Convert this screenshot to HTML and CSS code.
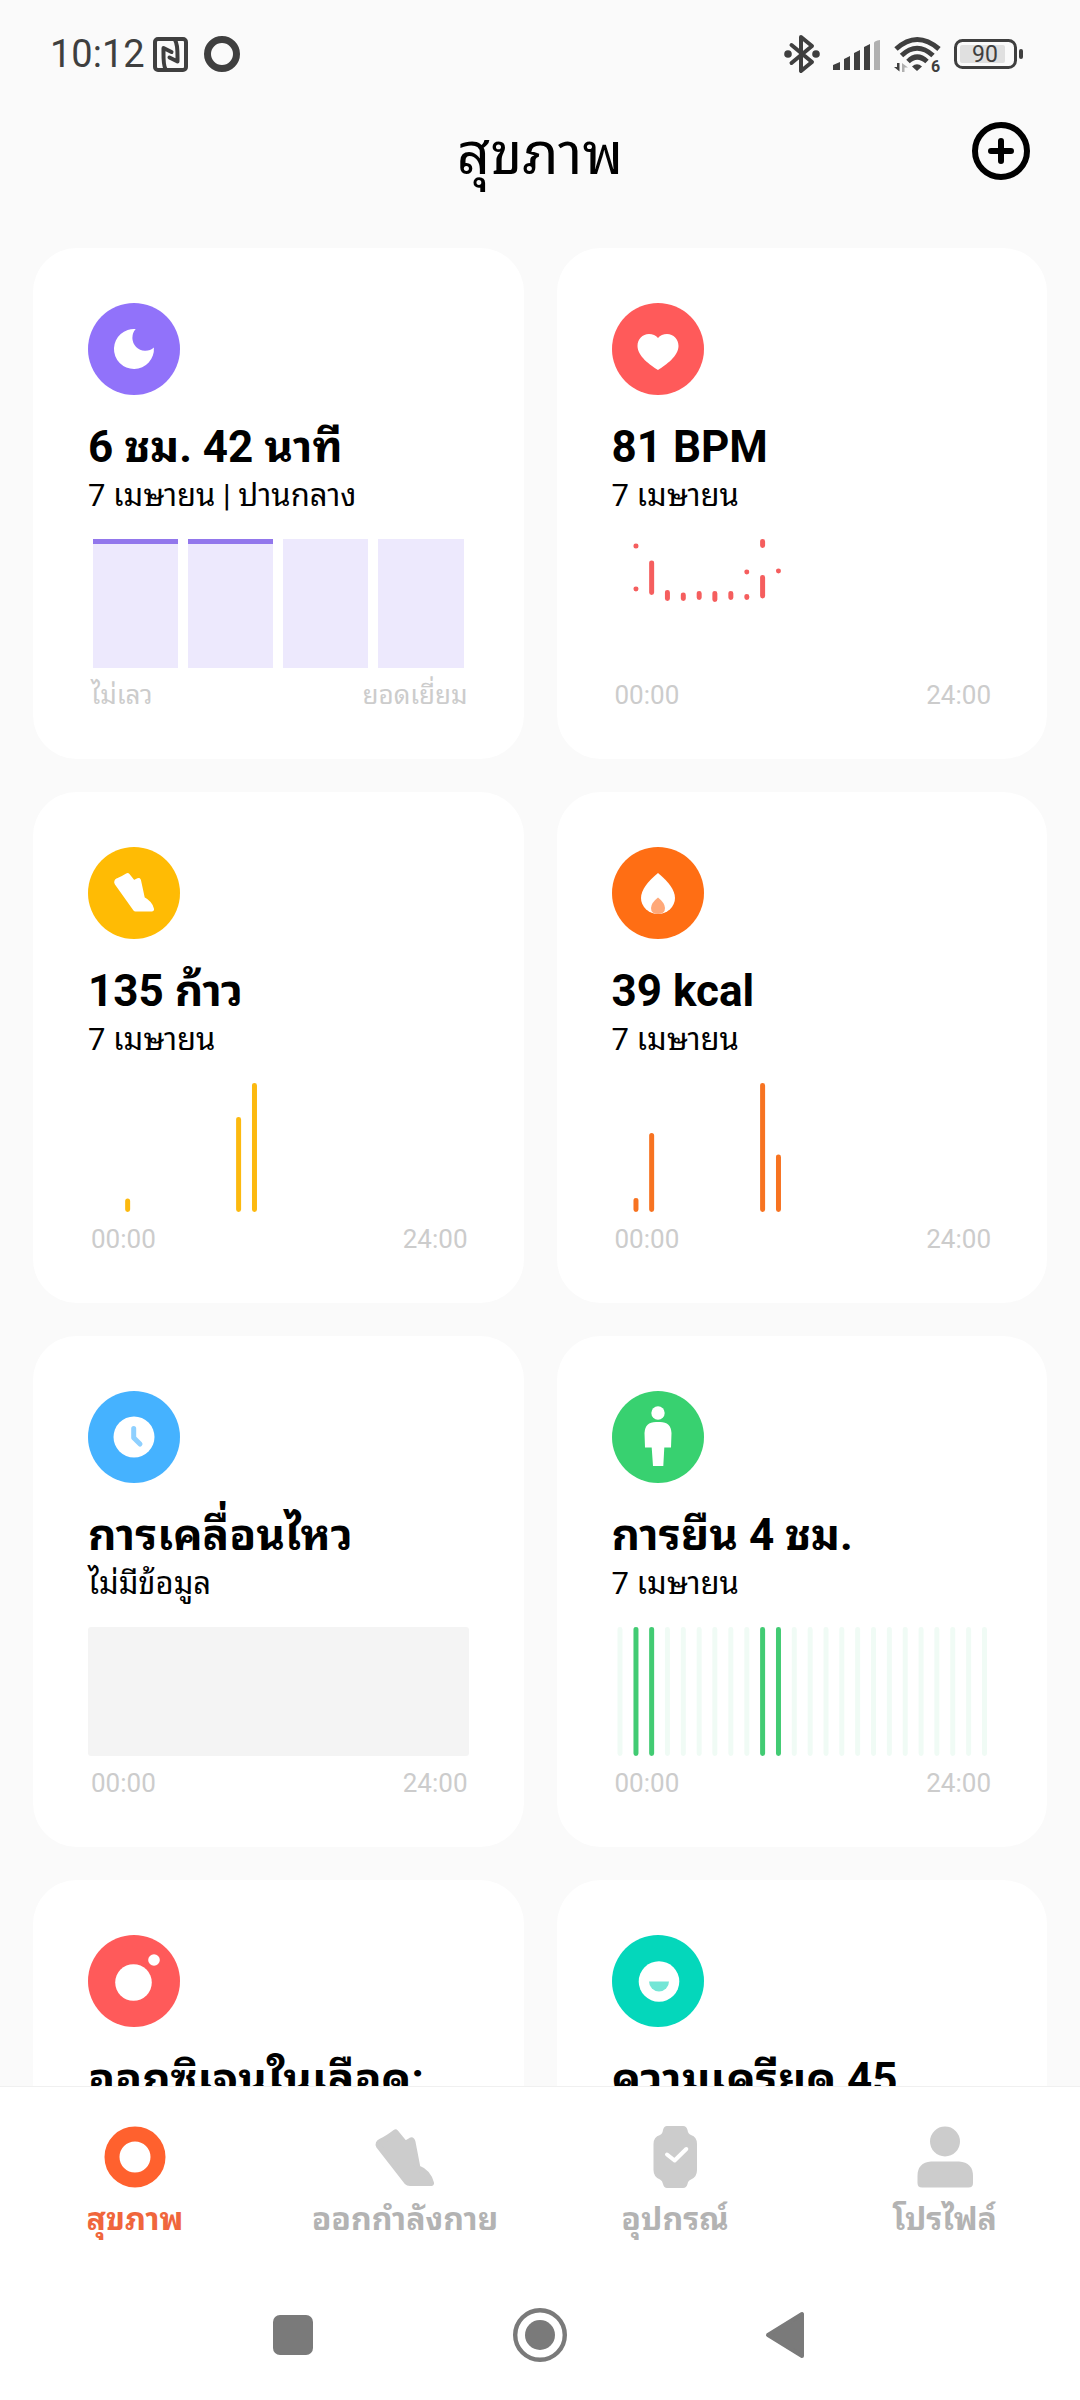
FILE: index.html
```html
<!DOCTYPE html>
<html lang="th">
<head>
    <meta charset="UTF-8">
    <meta name="viewport" content="width=device-width, initial-scale=1.0">
    <title>สุขภาพ</title>
    <link rel="stylesheet" href="styles.css">
</head>
<body>
<div class="screen">

    <!-- status bar -->
    <div class="status-bar">
        <div class="status-left">
            <span class="clock">10:12</span>
            <svg class="icon-nfc" width="35" height="35" viewBox="0 0 35 35" fill="none" stroke="#3f3f3f" stroke-width="4">
                <rect x="2" y="2" width="31" height="31" rx="3"/>
                <path d="M12.500 32C10 28 10.500 20 10.500 11L18.500 15M22 3C25 7 24.500 15 24.500 24.500L16.500 20.500" stroke-linecap="round" stroke-linejoin="round"/>
            </svg>
            <svg width="36" height="36" viewBox="0 0 36 36" fill="none" stroke="#3f3f3f" stroke-width="7">
                <circle cx="18" cy="18" r="14.500"/>
            </svg>
        </div>
        <div class="status-right">
            <svg width="36" height="40" viewBox="0 0 36 40">
                <path d="M7.500 11L28 28L17 37V3L28 12L7.500 29" fill="none" stroke="#3f3f3f" stroke-width="4" stroke-linecap="round" stroke-linejoin="round"/>
                <circle cx="4" cy="20" r="3.800" fill="#3f3f3f"/>
                <circle cx="32" cy="20" r="3.800" fill="#3f3f3f"/>
            </svg>
            <svg width="48" height="40" viewBox="0 0 48 40" fill="#3f3f3f">
                <path d="M0 31L7 28V36H0ZM11 25L17 22V36H11ZM21 19L27 16V36H21ZM31 13L37 10V36H31Z"/>
                <path d="M41 9Q41 7 47 6V36H41Z" fill="#b0b0b0"/>
            </svg>
            <svg width="47" height="40" viewBox="0 0 47 40">
                <path d="M2 15Q23 -4 45 15M7.500 21.500Q23 7 39 21.500M14 27.500Q23 18.500 33 27.500" fill="none" stroke="#3f3f3f" stroke-width="5"/>
                <path d="M18 32.500Q23 28 28 32.500L23 37Z" fill="#3f3f3f"/>
                <path d="M5.500 29V37.500L0 33H3V29Z" fill="#3f3f3f"/>
                <path d="M8 38V29L14 33.500H10.500V38Z" fill="#b0b0b0"/>
                <text class="wifi-text" x="37" y="38">6</text>
            </svg>
            <svg width="69" height="40" viewBox="0 0 69 40">
                <rect x="1.500" y="6.500" width="60" height="27" rx="7" fill="none" stroke="#3f3f3f" stroke-width="3"/>
                <rect x="6" y="11" width="45" height="18" rx="2" fill="#e0e0e0"/>
                <rect x="65" y="15" width="4" height="10" rx="2" fill="#3f3f3f"/>
                <text class="battery-text" x="18" y="28">90</text>
            </svg>
        </div>
    </div>

    <!-- header -->
    <header class="header">
        <h1>สุขภาพ</h1>
        <button class="btn-add" type="button" aria-label="เพิ่ม">
            <svg width="58" height="58" viewBox="0 0 58 58" fill="none" stroke="#000" stroke-width="6">
                <circle cx="29" cy="29" r="26"/>
                <path d="M19 29H39M29 19V39" stroke-linecap="round"/>
            </svg>
        </button>
    </header>

    <!-- cards -->
    <main class="cards">
        <section class="card">
            <svg class="card-icon" viewBox="0 0 92 92">
                <circle cx="46" cy="46" r="46" fill="#9172fa"/>
                <path d="M47.700 26.100A20 20 0 1 0 65.900 44.600A13 13 0 0 1 47.700 26.100Z" fill="#fff"/>
            </svg>
            <h2>6 ชม. 42 นาที</h2>
            <p class="card-date">7 เมษายน | ปานกลาง</p>
            <div class="chart sleep-chart">
                <span class="sleep-block active"></span>
                <span class="sleep-block active"></span>
                <span class="sleep-block"></span>
                <span class="sleep-block"></span>
            </div>
            <div class="axis"><span>ไม่เลว</span><span>ยอดเยี่ยม</span></div>
        </section>

        <section class="card">
            <svg class="card-icon" viewBox="0 0 92 92">
                <circle cx="46" cy="46" r="46" fill="#ff5a5a"/>
                <path d="M46 67C38 62 25.500 53 25.500 43C25.500 36 30.500 31 37 31C40.500 31 44 32.500 46 35C48 32.500 51.500 31 55 31C61.500 31 66.500 36 66.500 43C66.500 53 54 62 46 67Z" fill="#fff"/>
            </svg>
            <h2>81 BPM</h2>
            <p class="card-date">7 เมษายน</p>
            <svg class="chart chart-heart" viewBox="0 0 381 129">
                <path d="M24 7V7.010M24 50V50.010M39.700 24V53.500M55.500 53.500V59.500M71.400 56V59.500M87.300 54.500V58.500M103 54.500V60.500M119 54.500V58.500M135 33V33.010M135 57.500V58.500M150.800 2.500V6.500M150.800 38.500V57M166.700 32V32.010"/>
            </svg>
            <div class="axis"><span>00:00</span><span>24:00</span></div>
        </section>

        <section class="card">
            <svg class="card-icon" viewBox="0 0 92 92">
                <circle cx="46" cy="46" r="46" fill="#ffbb04"/>
                <path d="M29 36Q28 34.500 30 33.500Q34 32 39.500 28.500L45.500 36L50.500 33.500L54.500 52Q62 56 63.500 62H47.500Z" fill="#fff" stroke="#fff" stroke-width="5" stroke-linejoin="round"/>
            </svg>
            <h2>135 ก้าว</h2>
            <p class="card-date">7 เมษายน</p>
            <svg class="chart chart-steps" viewBox="0 0 381 129">
                <path d="M39.700 118V126.500M150.800 36.500V126.500M166.700 2.500V126.500"/>
            </svg>
            <div class="axis"><span>00:00</span><span>24:00</span></div>
        </section>

        <section class="card">
            <svg class="card-icon" viewBox="0 0 92 92">
                <circle cx="46" cy="46" r="46" fill="#ff6e14"/>
                <path d="M46 26Q63 40 63 51A17 16 0 0 1 29 51Q29 40 46 26Z" fill="#fff"/>
                <path d="M46 50.500Q53 56 53 61Q53 67 46 67Q39 67 39 61Q39 56 46 50.500Z" fill="#ffa878"/>
            </svg>
            <h2>39 kcal</h2>
            <p class="card-date">7 เมษายน</p>
            <svg class="chart chart-kcal" viewBox="0 0 381 129">
                <path d="M24 117.500V126.500M39.700 52.500V126.500M150.800 2.500V126.500M166.700 74V126.500"/>
            </svg>
            <div class="axis"><span>00:00</span><span>24:00</span></div>
        </section>

        <section class="card">
            <svg class="card-icon" viewBox="0 0 92 92">
                <circle cx="46" cy="46" r="46" fill="#45b2ff"/>
                <circle cx="46" cy="46" r="20.500" fill="#fff"/>
                <path d="M45.700 37.500V46.700L52 53" fill="none" stroke="#8ed0ff" stroke-width="5" stroke-linecap="round" stroke-linejoin="round"/>
            </svg>
            <h2>การเคลื่อนไหว</h2>
            <p class="card-date">ไม่มีข้อมูล</p>
            <div class="chart chart-empty"></div>
            <div class="axis"><span>00:00</span><span>24:00</span></div>
        </section>

        <section class="card">
            <svg class="card-icon" viewBox="0 0 92 92">
                <circle cx="46" cy="46" r="46" fill="#38d170"/>
                <circle cx="46" cy="22" r="6.700" fill="#fff"/>
                <path d="M33 56.500L32.500 42Q33 31 44 31H48Q59 31 59.500 42L59 56.500H52.300L51.300 75H41L39.700 56.500Z" fill="#fff"/>
            </svg>
            <h2>การยืน 4 ชม.</h2>
            <p class="card-date">7 เมษายน</p>
            <svg class="chart chart-stand" viewBox="0 0 381 129">
                <path class="faint" d="M8 2.500V126.500M55.500 2.500V126.500M71.400 2.500V126.500M87.300 2.500V126.500M103 2.500V126.500M119 2.500V126.500M135 2.500V126.500M182.500 2.500V126.500M198.400 2.500V126.500M214.300 2.500V126.500M230.100 2.500V126.500M246 2.500V126.500M261.900 2.500V126.500M277.700 2.500V126.500M293.600 2.500V126.500M309.500 2.500V126.500M325.300 2.500V126.500M341.200 2.500V126.500M357.100 2.500V126.500M373 2.500V126.500"/>
                <path d="M24 2.500V126.500M39.700 2.500V126.500M150.800 2.500V126.500M166.700 2.500V126.500"/>
            </svg>
            <div class="axis"><span>00:00</span><span>24:00</span></div>
        </section>

        <section class="card">
            <svg class="card-icon" viewBox="0 0 92 92">
                <circle cx="46" cy="46" r="46" fill="#ff5a5a"/>
                <circle cx="45.500" cy="47.500" r="18.300" fill="#fff"/>
                <circle cx="66" cy="25" r="5.800" fill="#fff"/>
            </svg>
            <h2>ออกซิเจนในเลือด:</h2>
        </section>

        <section class="card">
            <svg class="card-icon" viewBox="0 0 92 92">
                <circle cx="46" cy="46" r="46" fill="#04d7bb"/>
                <circle cx="47" cy="46.500" r="20.300" fill="#fff"/>
                <path d="M37 46.500H57A10 10 0 0 1 37 46.500Z" fill="#74e6d6"/>
            </svg>
            <h2>ความเครียด 45</h2>
        </section>
    </main>

    <!-- tab bar -->
    <nav class="tabs">
        <a class="tab active" href="#health">
            <svg width="62" height="62" viewBox="0 0 62 62" fill="none" stroke="#ff612e" stroke-width="15">
                <circle cx="31" cy="31" r="23"/>
            </svg>
            <span>สุขภาพ</span>
        </a>
        <a class="tab" href="#workout">
            <svg width="62" height="62" viewBox="0 0 62 62">
                <path d="M5 20Q3.500 17 7 15.500Q13 13 21.500 6.500L31 18L37 14.500Q38 14 38.500 16L43.500 42Q54 46 57 57H36Q34 57 33 56Z" fill="#ccc" stroke="#ccc" stroke-width="6" stroke-linejoin="round"/>
            </svg>
            <span>ออกกำลังกาย</span>
        </a>
        <a class="tab" href="#device">
            <svg width="62" height="62" viewBox="0 0 62 62">
                <path d="M23 0H39Q42.500 0 43.500 4Q44 8 47 9Q53 11 53 18V44Q53 51 47 53.500Q44 54.500 43.500 58Q42.500 62 39 62H23Q20 62 19 58Q18.500 54.500 16 53.500Q9.500 51 9.500 44V18Q9.500 11 16 9Q18.500 8 19 4Q20 0 23 0Z" fill="#ccc"/>
                <path d="M23 28.500L30.600 34.500L42.300 23" fill="none" stroke="#fff" stroke-width="4" stroke-linecap="round" stroke-linejoin="round"/>
            </svg>
            <span>อุปกรณ์</span>
        </a>
        <a class="tab" href="#profile">
            <svg width="62" height="62" viewBox="0 0 62 62" fill="#ccc">
                <circle cx="31" cy="15.500" r="15"/>
                <path d="M17 35.500H45Q59 36.500 59 50V57Q59 61.500 54.500 61.500H8Q3.500 61.500 3.500 57V50Q3.500 36.500 17 35.500Z"/>
            </svg>
            <span>โปรไฟล์</span>
        </a>
    </nav>

    <!-- android buttons -->
    <div class="system-nav">
        <button type="button" aria-label="แอปล่าสุด">
            <svg width="54" height="54" viewBox="0 0 54 54"><rect x="7" y="7" width="40" height="40" rx="7" fill="#7a7a7a"/></svg>
        </button>
        <button type="button" aria-label="หน้าแรก">
            <svg width="54" height="54" viewBox="0 0 54 54">
                <circle cx="27" cy="27" r="24.800" fill="none" stroke="#7a7a7a" stroke-width="4.400"/>
                <circle cx="27" cy="27" r="15" fill="#7a7a7a"/>
            </svg>
        </button>
        <button type="button" aria-label="ย้อนกลับ">
            <svg width="54" height="54" viewBox="0 0 54 54"><path d="M8 27L42 6V48Z" fill="#7a7a7a" stroke="#7a7a7a" stroke-width="4" stroke-linejoin="round"/></svg>
        </button>
    </div>

</div>
</body>
</html>
```

FILE: styles.css
```css
* {
    box-sizing: border-box;
}
body {
    margin: 0;
    font-family: Roboto, "Noto Sans Thai Looped", "Noto Looped Thai", "Noto Sans Thai", "Noto Sans", sans-serif;
    background-color: #fafafa;
    color: #000;
}
h1, h2, p {
    margin: 0;
}
svg {
    display: block;
    overflow: visible;
}
button {
    padding: 0;
    border: none;
    background: none;
    cursor: pointer;
}
.screen {
    display: flex;
    flex-direction: column;
    height: 100vh;
}
.status-bar {
    display: flex;
    justify-content: space-between;
    align-items: center;
    height: 108px;
    padding: 0 57px 0 50px;
    color: #3f3f3f;
}
.status-left, .status-right {
    display: flex;
    align-items: center;
    gap: 14px;
}
.status-right {
    gap: 13px;
}
.clock {
    font-size: 38px;
}
.icon-nfc {
    margin-right: 2px;
    margin-left: -6px;
}
.wifi-text {
    font-size: 16px;
    font-weight: 700;
    fill: #3f3f3f;
}
.battery-text {
    font-size: 23px;
    fill: #3f3f3f;
}
.header {
    display: grid;
    grid-template-columns: 1fr auto 1fr;
    align-items: center;
    height: 86px;
    padding: 0 50px;
}
.header h1 {
    grid-column: 2;
    padding-top: 6px;
    font-size: 58px;
    font-weight: 400;
    line-height: 80px;
}
.btn-add {
    justify-self: end;
}
.cards {
    display: grid;
    grid-template-columns: 1fr 1fr;
    grid-auto-rows: min-content;
    gap: 33px;
    flex: 1;
    min-height: 0;
    padding: 54px 33px 0;
    overflow: hidden;
}
.card {
    min-width: 0;
    padding: 55px 55px 44px;
    border-radius: 44px;
    background: #fff;
}
.card-icon {
    width: 92px;
    height: 92px;
}
.card h2 {
    margin-top: 24px;
    font-size: 44px;
    font-weight: 700;
    line-height: 56px;
    white-space: nowrap;
}
.card-date {
    font-size: 31px;
    line-height: 42px;
    white-space: nowrap;
}
.chart {
    display: block;
    width: 100%;
    height: 129px;
    margin-top: 22px;
    fill: none;
    stroke-width: 5;
    stroke-linecap: round;
}
.sleep-chart {
    display: grid;
    grid-template-columns: repeat(4, 1fr);
    gap: 10px;
    padding: 0 5px;
}
.sleep-block {
    background: #ede9fd;
}
.sleep-block.active {
    border-top: 5px solid #9277ec;
}
.chart-heart {
    stroke: #f55e5e;
}
.chart-steps {
    stroke: #fcb90f;
}
.chart-kcal {
    stroke: #f77321;
}
.chart-stand {
    stroke: #42cb73;
}
.chart-stand .faint {
    stroke: #f0fbf5;
}
.chart-empty {
    border-radius: 3px;
    background: #f4f4f4;
}
.axis {
    display: flex;
    justify-content: space-between;
    margin-top: 7px;
    padding: 0 1px 0 3px;
    font-size: 26px;
    line-height: 40px;
    color: #ccc;
}
.tabs {
    display: grid;
    grid-template-columns: repeat(4, 1fr);
    height: 184px;
    padding-top: 39px;
    border-top: 1px solid #f0f0f0;
    background: #fff;
}
.tab {
    display: flex;
    flex-direction: column;
    align-items: center;
    gap: 10px;
    font-size: 32px;
    font-weight: 700;
    line-height: 42px;
    color: #b3b3b3;
    text-decoration: none;
}
.tab.active {
    color: #f0663c;
}
.system-nav {
    display: grid;
    grid-template-columns: repeat(3, 1fr);
    place-items: center;
    height: 130px;
    padding: 0 170px;
    background: #fff;
}
```
